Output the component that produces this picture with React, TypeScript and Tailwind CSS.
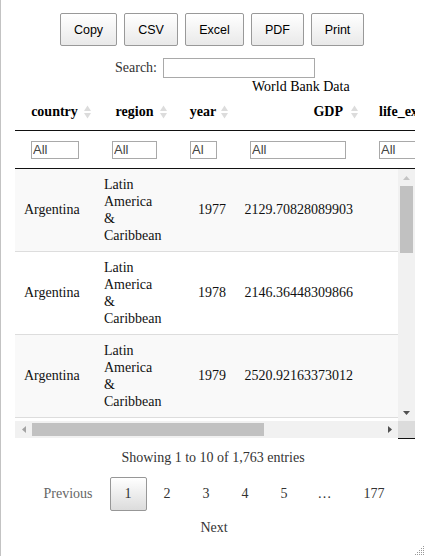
import React from "react";

const rows = [
  { country: "Argentina", region: "Latin America & Caribbean", year: 1977, gdp: "2129.70828089903" },
  { country: "Argentina", region: "Latin America & Caribbean", year: 1978, gdp: "2146.36448309866" },
  { country: "Argentina", region: "Latin America & Caribbean", year: 1979, gdp: "2520.92163373012" },
];

const SortIcon = () => (
  <svg width="7" height="16" viewBox="0 0 7 16" className="shrink-0">
    <path d="M0 7 L3.5 1.5 L7 7 Z" fill="#dcdcdc" />
    <path d="M0 9 L3.5 14.5 L7 9 Z" fill="#dcdcdc" />
  </svg>
);

const Arrow = ({ dir, color }: { dir: "up" | "down" | "left" | "right"; color: string }) => {
  const d = {
    up: "M0 4 L3.5 0 L7 4 Z",
    down: "M0 0 L3.5 4 L7 0 Z",
    left: "M4 0 L0 3.5 L4 7 Z",
    right: "M0 0 L4 3.5 L0 7 Z",
  }[dir];
  const vert = dir === "up" || dir === "down";
  return (
    <svg width={vert ? 7 : 4} height={vert ? 4 : 7} viewBox={vert ? "0 0 7 4" : "0 0 4 7"}>
      <path d={d} fill={color} />
    </svg>
  );
};

export default function App() {
  return (
    <div className="w-[425px] h-[556px] relative overflow-hidden bg-white border-l border-[#c3c3c3] font-['Liberation_Serif','Times_New_Roman',serif] text-[14px] leading-[20px] text-[#333]">
      {/* Export buttons */}
      <div className="flex justify-center gap-[7px] pt-[13px] pr-[2px]">
        {[
          ["Copy", "w-[57px]"],
          ["CSV", "w-[54px]"],
          ["Excel", "w-[59px]"],
          ["PDF", "w-[53px]"],
          ["Print", "w-[53px]"],
        ].map(([label, w]) => (
          <button
            key={label}
            className={`${w} h-[33px] flex items-center justify-center border border-[#999] rounded-[2px] bg-linear-to-b from-white to-[#e9e9e9] font-['Liberation_Sans',Arial,sans-serif] text-[12.5px] text-black`}
          >
            {label}
          </button>
        ))}
      </div>

      {/* Search */}
      <div className="flex justify-center items-center gap-[6px] pl-[4px] mt-[12px] h-[20px]">
        <span>Search:</span>
        <input className="w-[152px] h-[20px] border border-[#a9a9a9] outline-none" />
      </div>

      {/* Caption */}
      <div className="h-[17px] leading-[17px] pl-[251px] text-black">World Bank Data</div>

      {/* Table */}
      <div className="ml-[14px] w-[400px] text-black">
        {/* Header */}
        <div className="flex h-[36px] pt-[7px] border-b border-[#111] overflow-hidden font-bold whitespace-nowrap">
          <div className="flex items-center w-[84px] shrink-0 pl-[10px] pr-[8px] h-[20px]">
            <span className="flex-1 text-center">country</span>
            <SortIcon />
          </div>
          <div className="flex items-center w-[76px] shrink-0 pl-[10px] pr-[8px] h-[20px]">
            <span className="flex-1 text-center">region</span>
            <SortIcon />
          </div>
          <div className="flex items-center w-[61px] shrink-0 pl-[10px] pr-[8px] h-[20px]">
            <span className="flex-1 text-center">year</span>
            <SortIcon />
          </div>
          <div className="flex items-center w-[130px] shrink-0 pl-[10px] pr-[8px] h-[20px]">
            <span className="flex-1 text-right pr-[8px]">GDP</span>
            <SortIcon />
          </div>
          <div className="flex items-center shrink-0 pl-[13px] h-[20px]">
            <span>life_expectancy</span>
          </div>
        </div>

        {/* Filters */}
        <div className="flex h-[38px] pt-[9px] border-b border-[#111] overflow-hidden">
          {[
            ["w-[84px]", "ml-[16px] w-[48px] pr-[1px]"],
            ["w-[76px]", "ml-[13px] w-[45px] pr-[1px]"],
            ["w-[61px]", "ml-[15px] w-[27px] pr-[12px]"],
            ["w-[130px]", "ml-[14px] w-[96px] pr-[1px]"],
            ["w-[120px]", "ml-[13px] w-[90px] pr-[1px]"],
          ].map(([cw, iw], i) => (
            <div key={i} className={`${cw} shrink-0`}>
              <input
                placeholder="All"
                className={`${iw} h-[18px] border border-[#a9a9a9] pl-[1px] font-['Liberation_Sans',Arial,sans-serif] text-[13px] placeholder:text-[#444] outline-none`}
              />
            </div>
          ))}
        </div>

        {/* Body */}
        <div className="flex">
          <div className="w-[383px] h-[252px] overflow-hidden bg-white text-[#111]">
            {rows.map((r, i) => (
              <div
                key={r.year}
                className={`flex items-center w-[383px] h-[83px] border-b border-[#ddd] ${i % 2 === 0 ? "bg-[#f9f9f9]" : "bg-white"}`}
              >
                <div className="w-[79px] shrink-0 pl-[9px]">{r.country}</div>
                <div className="w-[80px] shrink-0 px-[10px] leading-[17px]">{r.region}</div>
                <div className="w-[62px] shrink-0 pr-[10px] text-right">{r.year}</div>
                <div className="w-[128px] shrink-0 pr-[11px] text-right">{r.gdp}</div>
              </div>
            ))}
          </div>
          {/* vertical scrollbar */}
          <div className="w-[17px] h-[252px] bg-[#f1f1f1] flex flex-col">
            <div className="h-[17px] flex items-center justify-center">
              <Arrow dir="up" color="#c4c4c4" />
            </div>
            <div className="h-[67px] mx-[2px] bg-[#c1c1c1]" />
            <div className="flex-1" />
            <div className="h-[17px] flex items-center justify-center">
              <Arrow dir="down" color="#505050" />
            </div>
          </div>
        </div>

        {/* horizontal scrollbar + corner */}
        <div className="flex items-start">
          <div className="w-[383px] h-[17px] bg-[#f1f1f1] flex items-center">
            <div className="w-[17px] flex justify-center">
              <Arrow dir="left" color="#a3a3a3" />
            </div>
            <div className="w-[232px] h-[13px] bg-[#c1c1c1]" />
            <div className="flex-1" />
            <div className="w-[17px] flex justify-center">
              <Arrow dir="right" color="#505050" />
            </div>
          </div>
          <div className="w-[17px] h-[18px] bg-[#dcdcdc] border-b border-[#111]" />
        </div>
      </div>

      {/* Info */}
      <div className="mt-[9px] text-center">Showing 1 to 10 of 1,763 entries</div>

      {/* Pagination */}
      <div className="mt-[9px] flex justify-center">
        <span className="ml-[2px] px-[14px] py-[6px] border border-transparent text-[#666]">Previous</span>
        <span className="ml-[2px] px-[14px] py-[6px] min-w-[21px] text-center border border-[#979797] rounded-[2px] bg-linear-to-b from-white to-[#dcdcdc]">
          1
        </span>
        {["2", "3", "4", "5"].map((p) => (
          <span key={p} className="ml-[2px] px-[14px] py-[6px] min-w-[21px] text-center border border-transparent">
            {p}
          </span>
        ))}
        <span className="px-[14px] py-[6px] border border-transparent">…</span>
        <span className="ml-[2px] px-[14px] py-[6px] border border-transparent">177</span>
      </div>
      <div className="flex justify-center">
        <span className="ml-[2px] px-[14px] py-[6px] border border-transparent">Next</span>
      </div>

      {/* resize grip */}
      <svg width="12" height="12" viewBox="0 0 12 12" className="absolute right-0 bottom-0">
        {[
          [10, 2], [10, 4], [8, 4], [10, 6], [8, 6], [6, 6], [10, 8], [8, 8], [6, 8], [4, 8],
          [10, 10], [8, 10], [6, 10], [4, 10], [2, 10],
        ].map(([x, y]) => (
          <rect key={`${x}-${y}`} x={x} y={y} width="1" height="1" fill="#999" />
        ))}
      </svg>
    </div>
  );
}
